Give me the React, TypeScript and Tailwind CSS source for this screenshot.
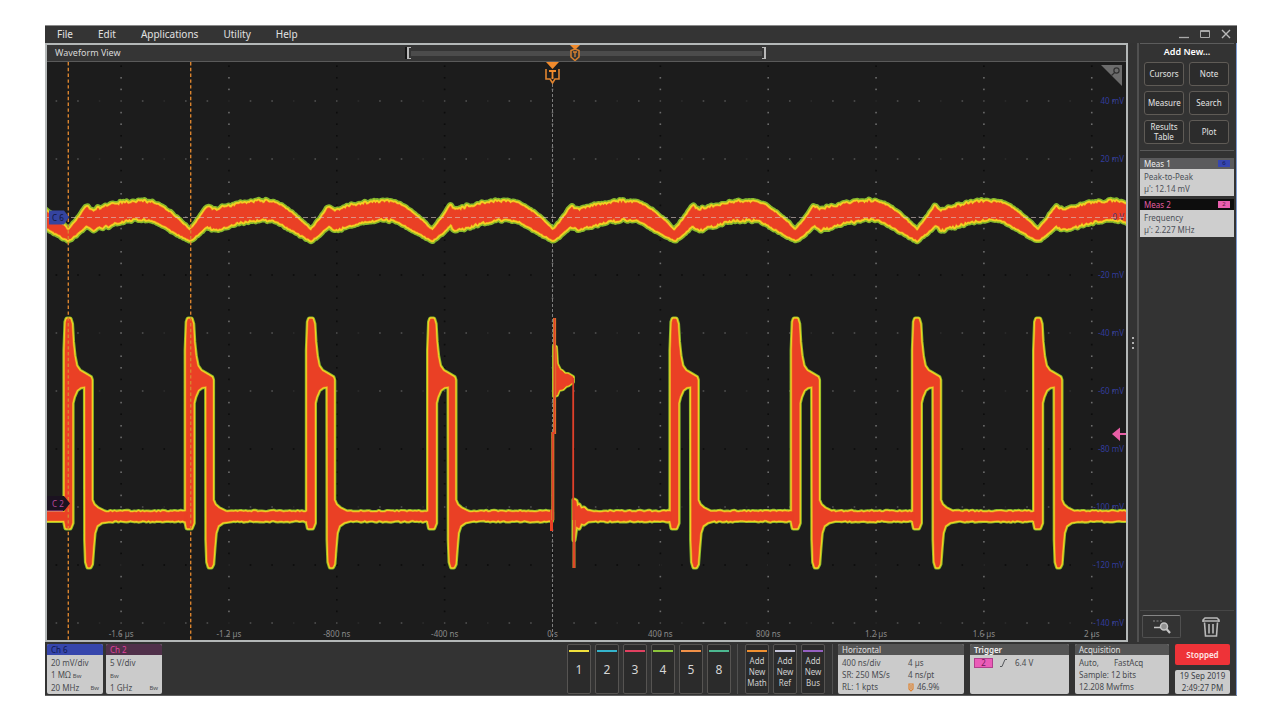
import React from 'react';

type Pt = [number, number];

const PERIOD = 121.2;
const FIRST = 68.5;
const DIVX = 107.85;
const CENTER = 552.5;

function noise(n: number): number {
  const v = Math.sin(n * 12.9898) * 43758.5453;
  return v - Math.floor(v) - 0.5;
}

function lerp(points: Pt[], x: number): number {
  for (let i = 1; i < points.length; i++) {
    if (x <= points[i][0]) {
      const [x0, y0] = points[i - 1];
      const [x1, y1] = points[i];
      return y0 + ((y1 - y0) * (x - x0)) / (x1 - x0);
    }
  }
  return points[points.length - 1][1];
}

const toPath = (pts: Pt[]) =>
  'M' + pts.map(([x, y]) => `${x.toFixed(1)} ${y.toFixed(1)}`).join('L') + 'Z';

const RIPPLE_TOP: Pt[] = [
  [0, 231], [9, 220], [18, 207], [24, 211], [34, 208], [50, 204.5], [62, 202.5], [74, 202],
  [84, 203], [92, 206.5], [102, 213.5], [112, 222], [121.2, 231],
];
const RIPPLE_BOTTOM: Pt[] = [
  [0, 240], [8, 234], [18, 225], [24, 229], [34, 226.5], [50, 222], [62, 219.5], [74, 218.5],
  [84, 219.5], [92, 223.5], [102, 229.5], [112, 235], [121.2, 240],
];

function ripplePath(): string {
  const top: Pt[] = [];
  const bottom: Pt[] = [];
  for (let x = 44; x <= 1130; x += 1.5) {
    const off = (x - FIRST + PERIOD * 2) % PERIOD;
    const busy = off > 18 && off < 80 ? 3 : 1.2;
    top.push([x, lerp(RIPPLE_TOP, off) + noise(x) * busy]);
    bottom.push([x, lerp(RIPPLE_BOTTOM, off) + noise(x + 700) * busy]);
  }
  return toPath([...top, ...bottom.reverse()]);
}

function level(x0: number, x1: number, y: number): Pt[] {
  const pts: Pt[] = [];
  for (let x = x0; x < x1; x += 2) pts.push([x, y + noise(x + y) * 1.4]);
  pts.push([x1, y]);
  return pts;
}

function pulsePath(k: number): string {
  const c = FIRST + PERIOD * k;
  const at = (pts: Pt[]): Pt[] => pts.map(([x, y]) => [x + c, y]);
  const end = k === 8 ? 1131 : k === 3 ? CENTER - 1 : c + PERIOD - 3;
  const lead = k === 0 ? 42 : c - 5;
  const upper: Pt[] = [
    [lead, 512],
    ...at([[-3.5, 512], [-3.5, 350], [-2.5, 322], [-1.5, 319], [1.5, 319], [3, 324], [4, 342], [5.5, 356], [7.5, 366], [11, 371],
      [17, 374.5], [22, 377.5], [22.8, 380], [22.8, 500], [25, 505], [29, 508.500], [36, 512]]),
    ...level(c + 38, end, 512),
  ];
  const lower: Pt[] = [
    ...level(c + 40, end, 520.5).reverse(),
    ...at([[33, 522], [28, 525.5], [25.5, 533], [24.2, 548], [23, 564], [21.5, 567], [19.5, 567], [18, 562], [17.2, 540],
      [17, 386], [12, 387], [8, 390], [5, 397], [3.5, 403], [3.5, 523], [1.5, 528], [-2.5, 528], [-4, 520.5]]),
    [lead, 520.5],
  ];
  return toPath([...upper, ...lower]);
}

const TRIGGER_BODY = toPath([
  [554, 346], [556, 347], [557, 364], [559, 368], [560, 370], [562, 371], [565, 374], [568, 374], [573, 377], [573, 382],
  [569, 385], [566, 386], [563, 389], [559, 390], [557, 395], [554, 396],
]);
const TRIGGER_TAIL = toPath([
  [574, 500], [576, 501], [577, 507], [579, 505], [581, 509], [584, 508], [587, 511], [592, 512],
  ...level(594, CENTER + PERIOD - 3, 512),
  ...level(594, CENTER + PERIOD - 3, 520.5).reverse(),
  [588, 521], [584, 524], [581, 523], [579, 528], [576, 526], [574, 540],
]);

const Trace = ({ d, outer, inner }: { d: string; outer: number; inner: number }) => (
  <g strokeLinejoin="round">
    <path d={d} fill="#86b92c" stroke="#86b92c" strokeWidth={outer} />
    <path d={d} fill="#f3cf22" stroke="#f3cf22" strokeWidth={inner} />
    <path d={d} fill="#ea4025" stroke="#ea4025" strokeWidth="0.6" />
  </g>
);

const PULSES = [0, 1, 2, 3, 5, 6, 7, 8];
const SWITCHING = PULSES.map(pulsePath).join('') + TRIGGER_TAIL;
const VOLTS = ['40 mV', '20 mV', '0 V', '-20 mV', '-40 mV', '-60 mV', '-80 mV', '-100 mV', '-120 mV', '-140 mV'];
const TIMES = ['-1.6 µs', '-1.2 µs', '-800 ns', '-400 ns', '0 s', '400 ns', '800 ns', '1.2 µs', '1.6 µs', '2 µs'];

function Plot() {
  const dots: React.ReactNode[] = [];
  for (let i = -4; i <= 5; i++) {
    const x = CENTER + i * DIVX;
    for (let j = -13; j <= 36; j++) {
      const dim = (j + 30) % 3 === 2 || i === -2 || i === -1;
      dots.push(
        <rect key={`v${i}_${j}`} x={x - 0.8} y={216.2 + j * 11.6} width="1.6" height="1.6" fill={dim ? '#0c0c0c' : '#6c6c6c'} />,
      );
    }
  }
  for (let r = 0; r < 10; r++) {
    const y = 101 + r * 58;
    for (let j = -23; j <= 26; j++) {
      const dark = r === 3 || r === 6 || r === 8;
      const faint = j % 3 === 0;
      dots.push(
        <rect key={`h${r}_${j}`} x={CENTER + j * 21.57 - 0.8} y={y - 0.8} width="1.6" height="1.6"
          fill={dark ? '#0c0c0c' : faint ? '#2c2c2c' : '#505050'} />,
      );
    }
  }
  return (
    <svg viewBox="47 62 1079 578" className="block h-auto w-full bg-[#1c1c1c]" role="img" aria-label="Waveform View">
      {dots}
      <path d={`M${CENTER} 84V640`} stroke="#7d7d7d" strokeWidth="1" strokeDasharray="3 2" />
      <g fontFamily='"Noto Sans", sans-serif' fontSize="8">
        {VOLTS.map((v, i) => (
          <text key={v} x="1124" y={104 + i * 58} textAnchor="end" fill="#333d9c">{v}</text>
        ))}
        {TIMES.map((t, i) => (
          <text key={t} x={CENTER + (i - 4) * DIVX} y="637" textAnchor="middle" fill="#8a8a8a">{t}</text>
        ))}
      </g>
      <Trace d={ripplePath()} outer={7.6} inner={4.4} />
      <text x="1124" y="220" textAnchor="end" fontFamily='"Noto Sans", sans-serif' fontSize="8" fill="#4a3a80">0 V</text>
      <Trace d={SWITCHING} outer={5.2} inner={3.4} />
      <Trace d={TRIGGER_BODY} outer={4} inner={2.6} />
      <path d="M551.5 510V531" stroke="#ea4025" strokeWidth="3" />
      <path d="M552.8 520V432M554.6 434V318M574 520V568" fill="none" stroke="#d59a2c" strokeWidth="3" />
      <path d="M552.8 520V432M554.6 434V318M573.2 378V520M574 510V568" fill="none" stroke="#e0402a" strokeWidth="1.8" />
      <path d="M47 217.5H1126" stroke="#d8c8c4" strokeWidth="1" strokeDasharray="5 3" opacity="0.6" />
      <path d="M68.3 62V640M190.7 62V640" stroke="#d9832e" strokeWidth="1.4" strokeDasharray="3.4 2.4" />
      <g>
        <path d="M546 62H559L552.5 69Z" fill="#f08a2c" />
        <path d="M546 69V79H550L552.5 83L555 79H559V69" fill="none" stroke="#e08430" strokeWidth="1.6" />
        <path d="M549 71H556M552.5 71V79" stroke="#f08a2c" strokeWidth="1.8" />
      </g>
      <path d="M1101 65H1122V86Z" fill="#6c6c6c" />
      <g fill="none" stroke="#303030" strokeWidth="1.2">
        <circle cx="1116.5" cy="70.5" r="2.6" />
        <path d="M1114.6 72.6L1111.5 75.5" />
      </g>
      <path d="M49 210.5H64L69 217L64 224.5H49Z" fill="#35449f" />
      <path d="M47 496H64L70 503.5L64 511H47Z" fill="#1b1220" />
      <path d="M47 511H63" stroke="#c04a9a" strokeWidth="1" />
      <path d="M1112 434L1120 427.5V441ZM1119 433H1126V435H1119Z" fill="#e85fa6" />
      <g fontFamily='"Noto Sans", sans-serif' fontSize="8">
        <text x="52" y="220.5" fill="#11163c">C 6</text>
        <text x="52" y="506.5" fill="#b8489a">C 2</text>
      </g>
    </svg>
  );
}

const MENUS = ['File', 'Edit', 'Applications', 'Utility', 'Help'];
const TOOLS = ['Cursors', 'Note', 'Measure', 'Search', 'Results Table', 'Plot'];

function MenuBar() {
  return (
    <header className="flex h-[18px] items-center border-t border-[#8a8a8a] bg-[#343434] pl-[12px] pr-[5px]">
      <nav className="flex gap-[25px] pb-[2px] text-[10px] leading-[14px] text-[#e2e2e2]">
        {MENUS.map((m) => (
          <button key={m} type="button">{m}</button>
        ))}
      </nav>
      <div className="ml-auto flex gap-[9px] pb-[2px]">
        <button type="button" aria-label="Minimize">
          <svg width="12" height="10" viewBox="0 0 12 10"><path d="M1 8.5H11" stroke="#a9a9a9" strokeWidth="1.3" /></svg>
        </button>
        <button type="button" aria-label="Maximize">
          <svg width="12" height="10" viewBox="0 0 12 10" fill="none" stroke="#a9a9a9"><path d="M1.5 1.5H10.5V8.5H1.5ZM1.5 2.5H10.5" /></svg>
        </button>
        <button type="button" aria-label="Close">
          <svg width="12" height="10" viewBox="0 0 12 10"><path d="M2 1L10 9M10 1L2 9" stroke="#b9b9b9" strokeWidth="1.4" /></svg>
        </button>
      </div>
    </header>
  );
}

function WaveformPane() {
  return (
    <section className="min-w-0 flex-1 border-2 border-[#b4b8b8]">
      <div className="grid h-[17px] grid-cols-3 items-center border-b border-[#5a5a5a] bg-[#353535]">
        <h1 className="pl-[8px] text-[9px] leading-[16px] text-[#d8d8d8]">Waveform View</h1>
        <div className="relative flex h-[12px] items-center justify-between shadow-[-2px_0_0_#151515]">
          <span className="h-[12px] w-[4px] border-y border-l-2 border-[#b8b8b8]" />
          <span className="h-[5px] flex-1 bg-[#4c4c4c]" />
          <span className="h-[12px] w-[4px] border-y border-r-2 border-[#b8b8b8]" />
          <svg className="absolute -top-[2px] left-[45%]" width="12" height="16" viewBox="0 0 12 16">
            <path d="M1 0H11L6 5Z" fill="#f08a2c" />
            <path d="M2 5.5V12L6 15.5L10 12V5.5L6 4Z" fill="#353535" stroke="#d9802e" strokeWidth="1.5" />
            <path d="M4 7H8M6 7V12" stroke="#d9802e" strokeWidth="1.3" />
          </svg>
        </div>
        <span />
      </div>
      <Plot />
    </section>
  );
}

interface MeasProps { title: string; badge: string; name: string; value: string; pink?: boolean }

function Measurement({ title, badge, name, value, pink }: MeasProps) {
  return (
    <article className="text-[8px]">
      <div className={pink ? 'flex h-[11px] items-center justify-between bg-[#0d0d0d] px-[4px] text-[#e05ca0]' : 'flex h-[11px] items-center justify-between bg-[#5b5b5d] px-[4px] text-[#efefef]'}>
        <h3 className="leading-[11px]">{title}</h3>
        <span className={pink ? 'h-[7px] w-[12px] bg-[#e85fae] text-center text-[6px] leading-[7px] text-[#5c1842]' : 'h-[7px] w-[12px] bg-[#3545b0] text-center text-[6px] leading-[7px] text-[#10184e]'}>{badge}</span>
      </div>
      <div className="h-[27px] bg-[#cecece] px-[4px] pt-[2px] leading-[12px] text-[#4c5058]">
        <p>{name}</p>
        <p>{value}</p>
      </div>
    </article>
  );
}

function SidePanel() {
  return (
    <aside className="flex w-[100px] shrink-0 flex-col border-l-2 border-r border-l-[#505050] border-r-[#7d9bd0] pl-px pr-[2px]">
      <h2 className="border-t border-[#5c5c5c] pb-[3px] text-center text-[9px] font-semibold leading-[15px] text-white">Add New...</h2>
      <div className="grid grid-cols-2 gap-x-[5px] gap-y-[5px] pl-[4px] pr-[5px]">
        {TOOLS.map((t) => (
          <button key={t} type="button" className="h-[24px] rounded-[3px] border border-[#5f5b56] bg-[#2c2c2c] px-[3px] text-[8px] leading-[10px] text-[#e4e4e4]">
            {t}
          </button>
        ))}
      </div>
      <div className="mt-[6px] flex flex-col gap-[3px] border-t border-[#5a5a5a] pt-[7px]">
        <Measurement title="Meas 1" badge="6" name="Peak-to-Peak" value="µ': 12.14 mV" />
        <Measurement title="Meas 2" badge="2" name="Frequency" value="µ': 2.227 MHz" pink />
      </div>
      <div className="mt-auto flex h-[32px] items-center justify-between border-t border-[#464646] pl-[2px] pr-[13px]">
        <button type="button" aria-label="Zoom" className="flex h-[23px] w-[39px] items-center justify-center rounded-[2px] border border-[#505050] border-t-[#858585]">
          <svg width="20" height="18" viewBox="0 0 20 18" fill="none" stroke="#c4c4c4">
            <path d="M1 3H10" strokeDasharray="2 1.5" stroke="#8a8a8a" />
            <path d="M2 9.5H8" strokeWidth="1.5" />
            <circle cx="12" cy="8.5" r="3.5" strokeWidth="1.5" fill="#909090" />
            <path d="M14.5 11L18 15" strokeWidth="2.2" />
          </svg>
        </button>
        <button type="button" aria-label="Delete">
          <svg width="20" height="22" viewBox="0 0 20 22" fill="none" stroke="#b9b9b9" strokeWidth="1.6">
            <path d="M2 6V4L4 2H16L18 4V6M2 5H18M3.500 6.500L4.500 20H15.500L16.500 6.500" />
            <path d="M8 8V17.500M12 8V17.500" />
          </svg>
        </button>
      </div>
    </aside>
  );
}

const Bandwidth = () => <span className="text-[6px]">Bw</span>;

interface CardProps { title: string; className: string; headClass: string; children: React.ReactNode }

function Card({ title, className, headClass, children }: CardProps) {
  return (
    <section className={`h-[50px] overflow-hidden rounded-[2px] bg-[#cbcbcb] text-[8px] leading-[12px] text-[#4a4c50] ${className}`}>
      <h3 className={`h-[11px] px-[4px] leading-[11px] ${headClass}`}>{title}</h3>
      <div className="px-[4px] pt-[2px]">{children}</div>
    </section>
  );
}

const CHANNELS = [
  { n: '1', bar: 'bg-[#f0e03c]' },
  { n: '2', bar: 'bg-[#35b4cc]' },
  { n: '3', bar: 'bg-[#e04060]' },
  { n: '4', bar: 'bg-[#8cc43c]' },
  { n: '5', bar: 'bg-[#f09048]' },
  { n: '8', bar: 'bg-[#4cb890]' },
];
const ADDERS = [
  { n: 'Math', bar: 'bg-[#f09030]' },
  { n: 'Ref', bar: 'bg-[#c4c4d8]' },
  { n: 'Bus', bar: 'bg-[#9460c0]' },
];
const slot = 'flex h-[50px] w-[24px] flex-col items-center rounded-[2px] border border-[#565452] bg-[#2b2b2b] pt-[5px]';

function Footer() {
  return (
    <footer className="flex h-[54px] items-start border-b border-r border-b-[#606060] border-r-[#7d9bd0] bg-[#333333] pl-[2px] pr-[6px] pt-[2px]">
      <Card title="Ch 6" className="w-[56px]" headClass="bg-[#3646ac] text-[#10184e]">
        <p>20 mV/div</p>
        <p>1 MΩ <Bandwidth /></p>
        <p className="flex justify-between">20 MHz <Bandwidth /></p>
      </Card>
      <Card title="Ch 2" className="ml-[3px] w-[56px]" headClass="bg-[#50304a] text-[#e0409c]">
        <p>5 V/div</p>
        <p><Bandwidth /></p>
        <p className="flex justify-between">1 GHz <Bandwidth /></p>
      </Card>
      <div className="ml-auto flex gap-[4px]">
        {CHANNELS.map((c) => (
          <button key={c.n} type="button" className={slot}>
            <span className={`h-[2px] w-[20px] ${c.bar}`} />
            <span className="pt-[10px] text-[12px] leading-[16px] text-[#d6d6d6]">{c.n}</span>
          </button>
        ))}
      </div>
      <div className="ml-[6px] flex gap-[4px] border-x border-[#505050] px-[7px]">
        {ADDERS.map((c) => (
          <button key={c.n} type="button" className={slot}>
            <span className={`h-[2px] w-[20px] ${c.bar}`} />
            <span className="pt-[3px] text-[8px] leading-[11px] text-[#cfcfcf]">Add<br />New<br />{c.n}</span>
          </button>
        ))}
      </div>
      <Card title="Horizontal" className="ml-[5px] w-[126px]" headClass="bg-[#555555] text-[#e0e0e0]">
        <div className="grid grid-cols-[66px_1fr]">
          <p>400 ns/div</p><p>4 µs</p>
          <p>SR: 250 MS/s</p><p>4 ns/pt</p>
          <p>RL: 1 kpts</p>
          <p className="flex items-center gap-[3px]">
            <svg width="6" height="9" viewBox="0 0 6 9" fill="none" stroke="#e08430" strokeWidth="1.2"><path d="M1 1V6L3 8L5 6V1ZM3 2V6" /></svg>
            46.9%
          </p>
        </div>
      </Card>
      <Card title="Trigger" className="ml-[6px] w-[99px]" headClass="bg-[#555555] font-semibold text-[#f0f0f0]">
        <p className="flex items-center gap-[7px]">
          <span className="h-[10px] w-[19px] border border-[#b0408c] bg-[#ea5cb8] text-center leading-[8px] text-[#701858]">2</span>
          <svg width="8" height="8" viewBox="0 0 8 8" fill="none" stroke="#55585c"><path d="M0 7.5H2L5 .5H7" /></svg>
          <span>6.4 V</span>
        </p>
      </Card>
      <Card title="Acquisition" className="ml-[6px] w-[94px]" headClass="bg-[#555555] text-[#e0e0e0]">
        <p className="flex gap-[15px]"><span>Auto,</span><span>FastAcq</span></p>
        <p>Sample: 12 bits</p>
        <p>12.208 Mwfms</p>
      </Card>
      <div className="ml-[6px] flex w-[55px] flex-col gap-[5px]">
        <button type="button" className="h-[21px] rounded-[2px] bg-[#ee3338] text-[8px] font-semibold leading-[21px] text-[#ffe6e6]">Stopped</button>
        <p className="rounded-[2px] bg-[#cbcbcb] text-center text-[8px] leading-[12px] text-[#3c3f46]">19 Sep 2019<br />2:49:27 PM</p>
      </div>
    </footer>
  );
}

export default function App() {
  return (
    <main className="min-h-screen bg-white pb-[24px] pl-[45px] pr-[43px] pt-[25px] font-['Noto_Sans','Open_Sans',sans-serif]">
      <div className="bg-[#333333]">
        <MenuBar />
        <div className="flex">
          <WaveformPane />
          <div className="flex w-[9px] shrink-0 flex-col items-center justify-center gap-[3px]" role="separator" aria-orientation="vertical">
            <span className="h-[2px] w-[2px] bg-[#b0b0b0]" />
            <span className="h-[2px] w-[2px] bg-[#b0b0b0]" />
            <span className="h-[2px] w-[2px] bg-[#b0b0b0]" />
          </div>
          <SidePanel />
        </div>
        <Footer />
      </div>
    </main>
  );
}
